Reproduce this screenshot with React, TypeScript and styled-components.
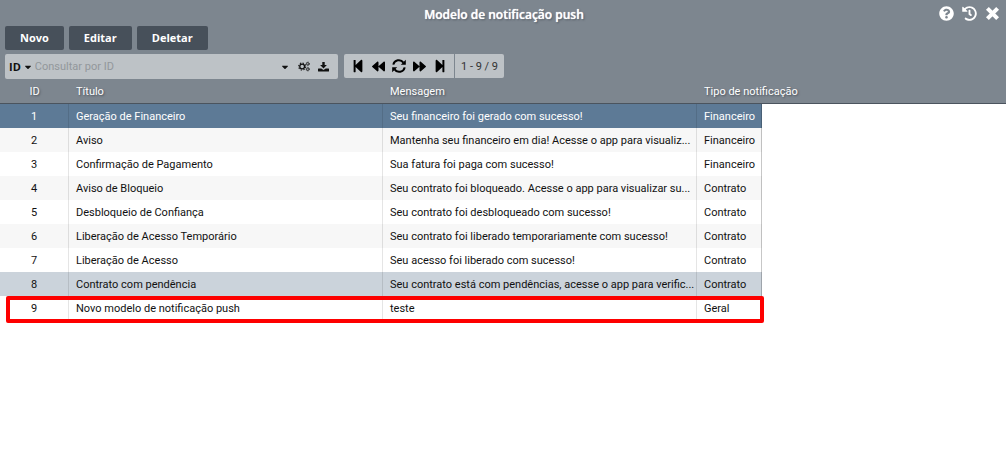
import React from "react";
import styled, { createGlobalStyle } from "styled-components";
import {
  FaQuestionCircle,
  FaHistory,
  FaCaretDown,
  FaStepBackward,
  FaBackward,
  FaForward,
  FaStepForward,
} from "react-icons/fa";

const GlobalStyle = createGlobalStyle`
  * { box-sizing: border-box; }
  body {
    margin: 0;
    background: #fff;
    color: #111;
    font-family: "Open Sans", "Noto Sans", sans-serif;
    font-size: 11px;
  }
  button, input { font: inherit; color: inherit; }
`;

const Page = styled.div`
  min-height: 100vh;
`;

const Header = styled.header`
  background: #7d868f;
`;

const TitleBar = styled.div`
  display: grid;
  grid-template-columns: 1fr auto 1fr;
  align-items: center;
  height: 26px;
  padding: 1px 6px 0 8px;
`;

const Title = styled.h1`
  grid-column: 2;
  margin: 0;
  padding-top: 3px;
  color: #fff;
  font-size: 12px;
  line-height: 16px;
  font-weight: 600;
  text-shadow: 0 0 1px #fff, 1px 1px 2px #4a525b;
`;

const WindowActions = styled.div`
  display: flex;
  justify-content: flex-end;
  align-items: center;
  gap: 8px;
`;

const IconButton = styled.button<{ $size?: number }>`
  display: flex;
  align-items: center;
  justify-content: center;
  padding: 0;
  border: 0;
  background: none;
  cursor: pointer;
  font-size: ${({ $size = 15 }) => $size}px;
`;

const WindowButton = styled(IconButton)`
  color: #fff;
`;

const Actions = styled.div`
  display: flex;
  gap: 5px;
  padding: 0 5px;
`;

const ActionButton = styled.button`
  height: 24px;
  padding: 0 15px;
  border: 0;
  border-radius: 2px;
  background: #47505a;
  color: #fff;
  font-weight: 700;
  line-height: 24px;
  cursor: pointer;
`;

const Toolbar = styled.div`
  display: flex;
  align-items: flex-start;
  gap: 6px;
  padding: 4px 5px 0;
`;

const SearchBox = styled.div`
  display: flex;
  align-items: center;
  gap: 8px;
  flex: 0 1 333px;
  height: 25px;
  padding: 0 9px 0 4px;
  border-radius: 2px;
  background: #bdc2c6;
  color: #111;
`;

const FieldPicker = styled.button`
  display: flex;
  align-items: center;
  gap: 2px;
  padding: 0;
  border: 0;
  background: none;
  font-weight: 700;
  line-height: 16px;
  cursor: pointer;
`;

const SearchInput = styled.input`
  flex: 1;
  min-width: 0;
  margin-left: -6px;
  padding: 0;
  border: 0;
  outline: 0;
  background: none;
  font-family: Roboto, "Open Sans", sans-serif;
  &::placeholder { color: #92979b; opacity: 1; }
`;

const Pager = styled.nav`
  display: flex;
  height: 24px;
  border-radius: 2px;
  background: #bdc2c6;
  color: #000;
`;

const PagerButtons = styled.div`
  display: flex;
  align-items: center;
  justify-content: space-between;
  width: 110px;
  padding: 0 7px;
`;

const PagerRange = styled.span`
  width: 50px;
  padding-top: 1px;
  border-left: 1px solid #7d868f;
  font-family: Roboto, sans-serif;
  line-height: 23px;
  text-align: center;
  color: #333;
`;

const GridArea = styled.main`
  position: relative;
`;

const Highlight = styled.div`
  position: absolute;
  bottom: -3px;
  left: 6px;
  width: 758px;
  height: 27px;
  border: 4px solid #fe0000;
  border-radius: 2px;
  pointer-events: none;
`;

const Grid = styled.table`
  width: 100%;
  table-layout: fixed;
  border-collapse: separate;
  border-spacing: 0;
  font-family: Roboto, "Open Sans", sans-serif;
`;

const Col = styled.col<{ $width?: number }>`
  width: ${({ $width }) => ($width ? `${$width}px` : "auto")};
`;

const HeadCell = styled.th<{ $center?: boolean }>`
  height: 25px;
  padding: 2px 7px 0;
  border-bottom: 1px solid #4b545e;
  background: #7d868f;
  color: #fff;
  font-weight: 400;
  line-height: 16px;
  text-align: ${({ $center }) => ($center ? "center" : "left")};
  text-shadow: 1px 1px 2px #4a525b;
  white-space: nowrap;
`;

type Tone = "selected" | "hover" | "even" | "odd";

const tones: Record<Tone, string> = {
  selected: "#5d7a96",
  hover: "#cbd3db",
  even: "#f7f7f7",
  odd: "#ffffff",
};

const Cell = styled.td<{ $center?: boolean }>`
  height: 24px;
  padding: ${({ $center }) => ($center ? "2px 7px 0" : "2px 2px 0 7px")};
  border-right: 1px solid rgba(0, 0, 0, 0.1);
  line-height: 16px;
  white-space: nowrap;
  text-align: ${({ $center }) => ($center ? "center" : "left")};
  &:last-child { border-right-color: rgba(0, 0, 0, 0.22); }
`;

const Row = styled.tr<{ $tone: Tone }>`
  color: ${({ $tone }) => ($tone === "selected" ? "#fff" : "#111")};
  ${Cell} { background: ${({ $tone }) => tones[$tone]}; }
`;

const CloseIcon = () => (
  <svg width="15" height="15" viewBox="0 0 15 15" fill="none" stroke="currentColor" strokeWidth="4" aria-hidden="true">
    <path d="M2.4 2.4l10.2 10.2M12.6 2.4L2.4 12.6" />
  </svg>
);

const RefreshIcon = () => (
  <svg width="14" height="14" viewBox="0 0 14 14" aria-hidden="true">
    <g fill="none" stroke="currentColor" strokeWidth="2">
      <path d="M1.3 5.6A5.6 5.6 0 0 1 11.4 3.6" />
      <path d="M12.7 8.4A5.6 5.6 0 0 1 2.6 10.4" />
    </g>
    <path d="M13.8 .8v5H8.8z" fill="currentColor" />
    <path d="M.2 13.2v-5h5z" fill="currentColor" />
  </svg>
);

const GearsIcon = () => (
  <svg width="12" height="11" viewBox="0 0 13 11" fill="none" stroke="currentColor" aria-hidden="true">
    <circle cx="4.5" cy="5.5" r="2.6" strokeWidth="1.4" />
    <circle cx="4.5" cy="5.5" r="3.8" strokeWidth="1.1" strokeDasharray="1.5 1.485" />
    <circle cx="10.6" cy="2.6" r="1.3" strokeWidth="0.9" />
    <circle cx="10.6" cy="2.6" r="2" strokeWidth="0.7" strokeDasharray="1 1.094" />
    <circle cx="10.6" cy="8.4" r="1.3" strokeWidth="0.9" />
    <circle cx="10.6" cy="8.4" r="2" strokeWidth="0.7" strokeDasharray="1 1.094" />
  </svg>
);

const DownloadIcon = () => (
  <svg width="11" height="10" viewBox="0 0 11 10" fill="currentColor" aria-hidden="true">
    <path d="M4.3 0h2.4v3h2.2L5.5 6.4 2.1 3h2.2z" />
    <path d="M.5 6.4h2.8l2.2 1.5 2.2-1.5h2.8q.5 0 .5.5v2.2q0 .5-.5.5H.5q-.5 0-.5-.5V6.9q0-.5.5-.5z" />
  </svg>
);

const rows: [string, string, string][] = [
  ["Geração de Financeiro", "Seu financeiro foi gerado com sucesso!", "Financeiro"],
  ["Aviso", "Mantenha seu financeiro em dia! Acesse o app para visualiz...", "Financeiro"],
  ["Confirmação de Pagamento", "Sua fatura foi paga com sucesso!", "Financeiro"],
  ["Aviso de Bloqueio", "Seu contrato foi bloqueado. Acesse o app para visualizar su...", "Contrato"],
  ["Desbloqueio de Confiança", "Seu contrato foi desbloqueado com sucesso!", "Contrato"],
  ["Liberação de Acesso Temporário", "Seu contrato foi liberado temporariamente com sucesso!", "Contrato"],
  ["Liberação de Acesso", "Seu acesso foi liberado com sucesso!", "Contrato"],
  ["Contrato com pendência", "Seu contrato está com pendências, acesse o app para verific...", "Contrato"],
  ["Novo modelo de notificação push", "teste", "Geral"],
];

const toneOf = (id: number): Tone =>
  id === 1 ? "selected" : id === 8 ? "hover" : id % 2 === 0 ? "even" : "odd";

export default function App() {
  return (
    <Page>
      <GlobalStyle />
      <Header>
        <TitleBar>
          <Title>Modelo de notificação push</Title>
          <WindowActions>
            <WindowButton aria-label="Ajuda"><FaQuestionCircle /></WindowButton>
            <WindowButton aria-label="Histórico"><FaHistory /></WindowButton>
            <WindowButton aria-label="Fechar"><CloseIcon /></WindowButton>
          </WindowActions>
        </TitleBar>
        <Actions>
          <ActionButton>Novo</ActionButton>
          <ActionButton>Editar</ActionButton>
          <ActionButton>Deletar</ActionButton>
        </Actions>
        <Toolbar>
          <SearchBox>
            <FieldPicker>ID <FaCaretDown size={10} /></FieldPicker>
            <SearchInput aria-label="Consultar" placeholder="Consultar por ID" />
            <IconButton $size={10} aria-label="Opções"><FaCaretDown /></IconButton>
            <IconButton aria-label="Configurar"><GearsIcon /></IconButton>
            <IconButton aria-label="Baixar"><DownloadIcon /></IconButton>
          </SearchBox>
          <Pager aria-label="Paginação">
            <PagerButtons>
              <IconButton $size={14} aria-label="Primeiro"><FaStepBackward /></IconButton>
              <IconButton $size={13} aria-label="Anterior"><FaBackward /></IconButton>
              <IconButton aria-label="Atualizar"><RefreshIcon /></IconButton>
              <IconButton $size={13} aria-label="Próximo"><FaForward /></IconButton>
              <IconButton $size={14} aria-label="Último"><FaStepForward /></IconButton>
            </PagerButtons>
            <PagerRange>1 - 9 / 9</PagerRange>
          </Pager>
        </Toolbar>
      </Header>
      <GridArea>
        <Grid>
          <colgroup>
            <Col $width={69} />
            <Col $width={314} />
            <Col $width={314} />
            <Col $width={65} />
            <Col />
          </colgroup>
          <thead>
            <tr>
              <HeadCell $center>ID</HeadCell>
              <HeadCell>Título</HeadCell>
              <HeadCell>Mensagem</HeadCell>
              <HeadCell colSpan={2}>Tipo de notificação</HeadCell>
            </tr>
          </thead>
          <tbody>
            {rows.map(([title, message, kind], i) => (
              <Row key={title} $tone={toneOf(i + 1)}>
                <Cell $center>{i + 1}</Cell>
                <Cell>{title}</Cell>
                <Cell>{message}</Cell>
                <Cell>{kind}</Cell>
              </Row>
            ))}
          </tbody>
        </Grid>
        <Highlight />
      </GridArea>
    </Page>
  );
}
